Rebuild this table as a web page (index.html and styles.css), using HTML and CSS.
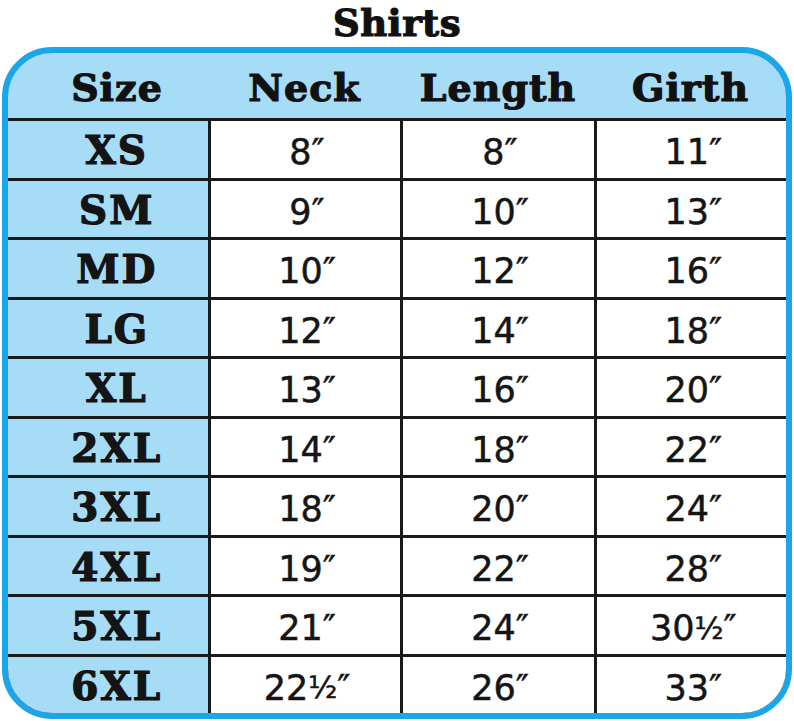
FILE: index.html
```html
<!DOCTYPE html>
<html>
<head>
<meta charset="utf-8">
<link rel="stylesheet" href="styles.css">
</head>
<body>
<div class="page">
  <h1 class="title">Shirts</h1>
  <div class="frame">
    <div class="head">
      <div class="hcell size">Size</div>
      <div class="hcell">Neck</div>
      <div class="hcell">Length</div>
      <div class="hcell">Girth</div>
    </div>
    <div class="body">
      <div class="cell size">XS</div><div class="cell num">8″</div><div class="cell num">8″</div><div class="cell num">11″</div>
      <div class="cell size">SM</div><div class="cell num">9″</div><div class="cell num">10″</div><div class="cell num">13″</div>
      <div class="cell size">MD</div><div class="cell num">10″</div><div class="cell num">12″</div><div class="cell num">16″</div>
      <div class="cell size">LG</div><div class="cell num">12″</div><div class="cell num">14″</div><div class="cell num">18″</div>
      <div class="cell size">XL</div><div class="cell num">13″</div><div class="cell num">16″</div><div class="cell num">20″</div>
      <div class="cell size">2XL</div><div class="cell num">14″</div><div class="cell num">18″</div><div class="cell num">22″</div>
      <div class="cell size">3XL</div><div class="cell num">18″</div><div class="cell num">20″</div><div class="cell num">24″</div>
      <div class="cell size">4XL</div><div class="cell num">19″</div><div class="cell num">22″</div><div class="cell num">28″</div>
      <div class="cell size">5XL</div><div class="cell num">21″</div><div class="cell num">24″</div><div class="cell num">30<span class="frac">½</span>″</div>
      <div class="cell size">6XL</div><div class="cell num">22<span class="frac">½</span>″</div><div class="cell num">26″</div><div class="cell num">33″</div>
    </div>
  </div>
</div>
</body>
</html>
```
FILE: styles.css
```css
html, body {
  margin: 0;
  padding: 0;
  background: #ffffff;
}

.page {
  width: 794px;
  height: 721px;
  overflow: hidden;
}

.title {
  margin: 0;
  height: 47px;
  line-height: 46px;
  text-align: center;
  font-family: "DejaVu Serif", serif;
  font-weight: 700;
  font-size: 37px;
  letter-spacing: 0.5px;
  color: #111;
  -webkit-text-stroke: 1.2px #111;
}

.frame {
  box-sizing: border-box;
  margin-left: 2px;
  width: 790px;
  height: 672px;
  border: 6px solid #1aa6e8;
  border-radius: 50px;
  background: #a7dcf6;
  overflow: hidden;
  display: flex;
  flex-direction: column;
}

.head {
  height: 65px;
  flex: none;
  display: grid;
  grid-template-columns: 200px 193px 194px 1fr;
  align-items: center;
  border-bottom: 3px solid #1a1a1a;
}

.hcell {
  text-align: center;
  font-family: "DejaVu Serif", serif;
  font-weight: 700;
  font-size: 38px;
  letter-spacing: 1px;
  color: #111;
  -webkit-text-stroke: 1.2px #111;
  padding-top: 4px;
}

.hcell.size {
  padding-left: 18px;
}

.body {
  flex: 1;
  display: grid;
  grid-template-columns: 199.5px 189px 191px 1fr;
  grid-template-rows: repeat(10, 1fr);
  gap: 3px;
  background: #1a1a1a;
}

.cell {
  display: flex;
  align-items: center;
  justify-content: center;
  color: #151515;
}

.cell.size {
  background: #a7dcf6;
  padding-left: 18px;
  font-family: "DejaVu Serif", serif;
  font-weight: 700;
  font-size: 39px;
  letter-spacing: 2px;
  -webkit-text-stroke: 1.2px #111;
  padding-top: 2px;
}

.cell.num {
  background: #ffffff;
  font-family: "DejaVu Sans", sans-serif;
  font-size: 35px;
  -webkit-text-stroke: 0.5px #151515;
  padding-top: 6px;
  padding-left: 4px;
}

.frac {
  font-size: 30px;
}
```
